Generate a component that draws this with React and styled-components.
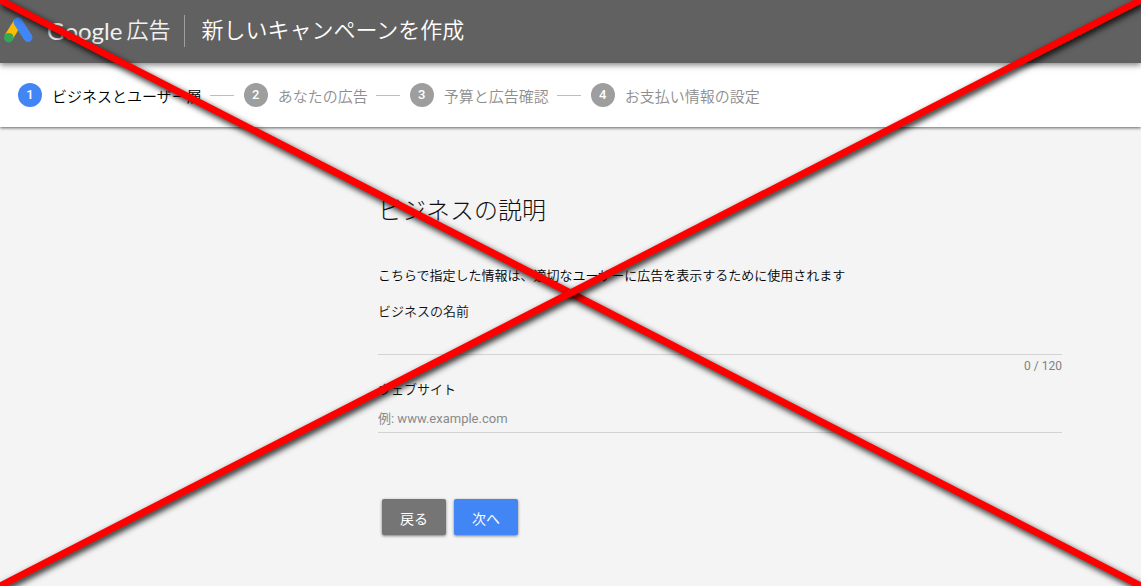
import React, { useState } from 'react';
import styled, { createGlobalStyle } from 'styled-components';

const GlobalStyle = createGlobalStyle`
  * {
    box-sizing: border-box;
  }

  body {
    margin: 0;
    background: #f4f4f4;
    color: #111;
    font-family: Roboto, 'Noto Sans CJK JP', sans-serif;
    font-size: 13px;
    font-weight: 350;
  }
`;

const Header = styled.header`
  position: relative;
  z-index: 2;
  display: flex;
  align-items: center;
  height: 63px;
  padding: 0 4px 2px;
  background: #616161;
  color: #fff;
  box-shadow: 0 2px 6px rgba(0, 0, 0, 0.5);
`;

const Logo = styled.svg`
  width: 29px;
  height: 27px;
  flex: none;
`;

const Brand = styled.a`
  display: flex;
  align-items: center;
  gap: 4px;
  margin-left: 14px;
  padding-right: 14px;
  height: 32px;
  border-right: 1px solid #9e9e9e;
  color: #f1f1f1;
  font-size: 22px;
  line-height: 32px;
  text-decoration: none;
`;

const BrandName = styled.span`
  font-family: Lato, sans-serif;
  font-size: 24px;
  font-weight: 400;
`;

const Title = styled.h1`
  margin: 0 0 0 16px;
  font-size: 22px;
  font-weight: 350;
  line-height: 32px;
`;

const Steps = styled.ol`
  position: relative;
  z-index: 1;
  display: flex;
  align-items: center;
  height: 64px;
  margin: 0;
  padding: 0 18px;
  list-style: none;
  background: #fff;
  box-shadow: 0 1px 3px rgba(0, 0, 0, 0.6);
`;

const Step = styled.li`
  display: flex;
  align-items: center;
  color: ${({ $active }) => ($active ? '#000' : '#8e8e8e')};
  font-size: 15px;
  white-space: nowrap;

  &:not(:last-child)::after {
    content: '';
    width: 24px;
    height: 1px;
    margin: 0 10px 0 8px;
    background: #bdbdbd;
  }
`;

const StepNumber = styled.span`
  width: 24px;
  height: 24px;
  margin-right: 10px;
  border-radius: 50%;
  background: ${({ $active }) => ($active ? '#4285f4' : '#9e9e9e')};
  color: #fff;
  font-size: 13px;
  font-weight: 500;
  line-height: 24px;
  text-align: center;
`;

const StepName = styled.span`
  padding-top: 4px;
  line-height: 20px;
`;

const Main = styled.main`
  max-width: 1141px;
  padding: 66px 79px 50px 378px;
`;

const Heading = styled.h2`
  margin: 0 0 37px;
  font-size: 24px;
  font-weight: 300;
  line-height: 36px;
`;

const Description = styled.p`
  margin: 0 0 16px;
  color: #000;
  line-height: 20px;
`;

const Field = styled.div`
  display: flex;
  flex-direction: column;
`;

const Label = styled.label`
  line-height: 20px;
`;

const Input = styled.input`
  width: 100%;
  height: 33px;
  padding: 6px 0 2px;
  border: none;
  border-bottom: 1px solid #d3d3d3;
  border-radius: 0;
  outline: none;
  background: transparent;
  color: #212121;
  font: inherit;
  font-weight: 400;

  &::placeholder {
    color: #8a8a8a;
    opacity: 1;
  }

  &:focus {
    border-color: #4285f4;
  }
`;

const Counter = styled.span`
  align-self: flex-end;
  height: 25px;
  color: #808080;
  font-size: 12px;
  font-weight: 400;
  line-height: 22px;
`;

const Buttons = styled.div`
  display: flex;
  gap: 8px;
  margin: 66px 4px 0;
`;

const Button = styled.button`
  min-width: 64px;
  height: 36px;
  padding: 2px 12px 0;
  border: none;
  border-radius: 2px;
  background: ${({ $primary }) => ($primary ? '#4285f4' : '#757575')};
  color: #fff;
  font-family: inherit;
  font-size: 14px;
  font-weight: 400;
  cursor: pointer;
  box-shadow: 0 1px 3px rgba(0, 0, 0, 0.5);
`;

const Cross = styled.svg`
  position: fixed;
  inset: 0;
  z-index: 3;
  width: 100%;
  height: 100%;
  pointer-events: none;
`;

const CrossLine = styled.line`
  stroke: #f00;
  stroke-width: 7px;
  filter: drop-shadow(2px 3px 3px rgba(0, 0, 0, 0.9));
`;

const steps = ['ビジネスとユーザー層', 'あなたの広告', '予算と広告確認', 'お支払い情報の設定'];

const App = () => {
    const [name, setName] = useState('');
    const [website, setWebsite] = useState('');

    return (
        <>
            <GlobalStyle />

            <Header>
                <Logo viewBox="0 0 29 27" aria-hidden="true">
                    <path d="M14 5 4.5 20.5" stroke="#fbbc04" strokeWidth="9" />
                    <path d="M14 5 24 20.5" stroke="#4285f4" strokeWidth="9" strokeLinecap="round" />
                    <circle cx="4.8" cy="20.7" r="4.8" fill="#34a853" />
                </Logo>
                <Brand href="#">
                    <BrandName>Google</BrandName>
                    広告
                </Brand>
                <Title>新しいキャンペーンを作成</Title>
            </Header>

            <Steps>
                {steps.map((step, index) => (
                    <Step key={step} $active={index === 0}>
                        <StepNumber $active={index === 0}>{index + 1}</StepNumber>
                        <StepName>{step}</StepName>
                    </Step>
                ))}
            </Steps>

            <Main>
                <Heading>ビジネスの説明</Heading>
                <Description>こちらで指定した情報は、適切なユーザーに広告を表示するために使用されます</Description>

                <Field>
                    <Label htmlFor="name">ビジネスの名前</Label>
                    <Input id="name" maxLength={120} value={name} onChange={(e) => setName(e.target.value)} />
                    <Counter>{name.length} / 120</Counter>
                </Field>
                <Field>
                    <Label htmlFor="website">ウェブサイト</Label>
                    <Input id="website" placeholder="例: www.example.com" value={website} onChange={(e) => setWebsite(e.target.value)} />
                </Field>

                <Buttons>
                    <Button type="button">戻る</Button>
                    <Button type="button" $primary>次へ</Button>
                </Buttons>
            </Main>

            {/* Crossed out: this form is not the one to fill in */}
            <Cross aria-hidden="true">
                <CrossLine x1="0" y1="0" x2="100%" y2="100%" />
                <CrossLine x1="100%" y1="0" x2="0" y2="100%" />
            </Cross>
        </>
    );
};

export default App;
